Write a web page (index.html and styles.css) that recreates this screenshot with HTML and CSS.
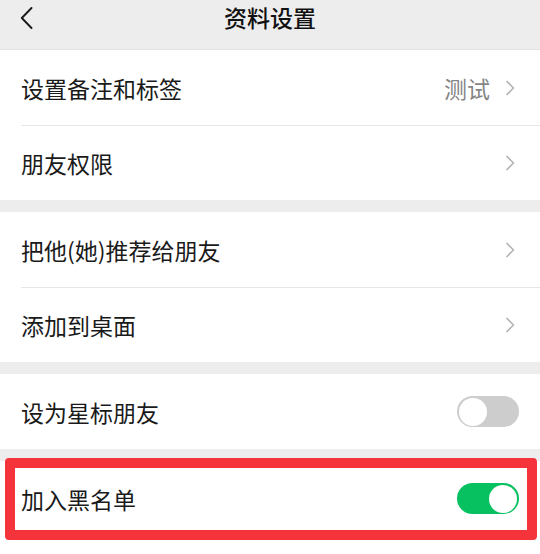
FILE: index.html
```html
<!DOCTYPE html>
<html lang="zh-CN">
<head>
<meta charset="utf-8">
<title>资料设置</title>
<link rel="stylesheet" href="styles.css">
</head>
<body>
<div class="page">
  <header class="nav">
    <svg class="back" width="13" height="22" viewBox="0 0 13 22" aria-hidden="true">
      <polyline points="11.5,1 1.8,11 11.5,21" fill="none" stroke="#1a1a1a" stroke-width="1.9" stroke-linecap="round" stroke-linejoin="round"/>
    </svg>
    <h1 class="nav-title">资料设置</h1>
  </header>

  <section class="group">
    <div class="row">
      <span class="label">设置备注和标签</span>
      <span class="aside"><span class="value">测试</span><svg class="chev" width="10" height="16" viewBox="0 0 10 16" aria-hidden="true"><polyline points="1.5,1 8.5,8 1.5,15" fill="none" stroke="#b5b5b5" stroke-width="1.6" stroke-linejoin="round"/></svg></span>
    </div>
    <div class="row">
      <span class="label">朋友权限</span>
      <span class="aside"><svg class="chev" width="10" height="16" viewBox="0 0 10 16" aria-hidden="true"><polyline points="1.5,1 8.5,8 1.5,15" fill="none" stroke="#b5b5b5" stroke-width="1.6" stroke-linejoin="round"/></svg></span>
    </div>
  </section>

  <section class="group">
    <div class="row">
      <span class="label">把他(她)推荐给朋友</span>
      <span class="aside"><svg class="chev" width="10" height="16" viewBox="0 0 10 16" aria-hidden="true"><polyline points="1.5,1 8.5,8 1.5,15" fill="none" stroke="#b5b5b5" stroke-width="1.6" stroke-linejoin="round"/></svg></span>
    </div>
    <div class="row">
      <span class="label">添加到桌面</span>
      <span class="aside"><svg class="chev" width="10" height="16" viewBox="0 0 10 16" aria-hidden="true"><polyline points="1.5,1 8.5,8 1.5,15" fill="none" stroke="#b5b5b5" stroke-width="1.6" stroke-linejoin="round"/></svg></span>
    </div>
  </section>

  <section class="group">
    <div class="row">
      <span class="label">设为星标朋友</span>
      <span class="switch"><span class="knob"></span></span>
    </div>
  </section>

  <section class="group group-last">
    <div class="row marked">
      <span class="label">加入黑名单</span>
      <span class="switch on"><span class="knob"></span></span>
      <span class="mark"></span>
    </div>
  </section>
</div>
</body>
</html>
```

FILE: styles.css
```css
* { box-sizing: border-box; }

html, body {
  margin: 0;
  padding: 0;
}

body {
  font-family: "Noto Sans CJK SC", "Noto Sans", sans-serif;
  color: #1a1a1a;
  background: #ededed;
}

.page {
  display: flex;
  flex-direction: column;
  gap: 12px;
  min-height: 100vh;
  background: #ededed;
}

.nav {
  position: relative;
  height: 50px;
  margin-bottom: -12px;
  border-bottom: 1px solid #e2e2e2;
  display: flex;
  justify-content: center;
  align-items: flex-start;
  background: #ededed;
}

.back {
  position: absolute;
  left: 20px;
  top: 7px;
}

.nav-title {
  margin: 0;
  height: 34px;
  line-height: 34px;
  font-size: 23px;
  font-weight: 500;
  color: #111;
  letter-spacing: 0;
}

.group {
  background: #fff;
}

.group-last {
  flex: 1;
}

.row {
  position: relative;
  height: 75px;
  margin-left: 21px;
  padding-right: 21px;
  display: flex;
  align-items: center;
  justify-content: space-between;
}

.row + .row {
  border-top: 1px solid #e6e6e6;
}

.label {
  font-size: 23px;
  line-height: 30px;
  color: #1a1a1a;
}

.aside {
  display: flex;
  align-items: center;
  gap: 15px;
}

.value {
  font-size: 23px;
  line-height: 30px;
  color: #858585;
}

.chev {
  display: block;
  margin-right: 4px;
}

.switch {
  position: relative;
  width: 62px;
  height: 31px;
  border-radius: 16px;
  background: #cdcdcd;
  display: flex;
  align-items: center;
  padding: 0 2px;
}

.switch .knob {
  width: 28px;
  height: 28px;
  border-radius: 50%;
  background: #fff;
}

.switch.on {
  background: #07c160;
  justify-content: flex-end;
}

.mark {
  position: absolute;
  left: -16px;
  right: 3px;
  top: -3px;
  bottom: -4px;
  border: 10px solid #f4333a;
  border-radius: 4px;
  pointer-events: none;
}
```
